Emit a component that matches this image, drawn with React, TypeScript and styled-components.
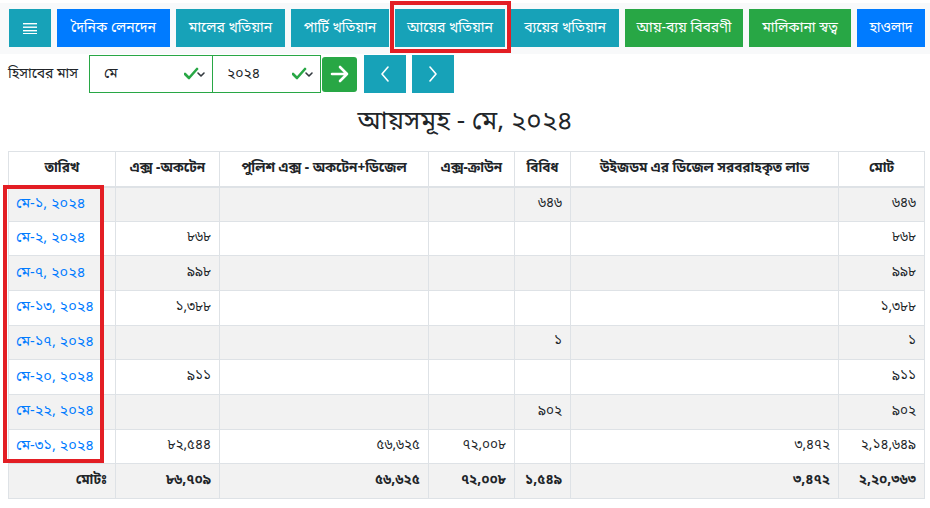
import React from "react";
import styled, { createGlobalStyle, css } from "styled-components";

const Global = createGlobalStyle`
  html, body { margin: 0; padding: 0; background: #fff; }
  body {
    font-family: "Noto Sans Bengali", "Lohit Bengali", "Noto Sans", "Liberation Sans", sans-serif;
    color: #212529;
    font-size: 14px;
  }
  * { box-sizing: border-box; }
`;

const Page = styled.div`
  width: 930px;
  padding-top: 3px;
`;

const Toolbar = styled.nav`
  display: flex;
  align-items: center;
  gap: 6px;
  background: #f8f9fa;
  padding: 6px 5px 7px 9px;
  height: 51px;
`;

type Variant = "info" | "primary" | "success";
const colors: Record<Variant, string> = {
  info: "#17a2b8",
  primary: "#007bff",
  success: "#28a745",
};

const NavButton = styled.button<{ $variant: Variant; $w: number }>`
  height: 38px;
  width: ${(p) => p.$w}px;
  border: none;
  border-radius: 0;
  background: ${(p) => colors[p.$variant]};
  color: #fff;
  font-family: inherit;
  font-size: 14px;
  padding: 0;
  display: flex;
  align-items: center;
  justify-content: center;
  white-space: nowrap;
  cursor: pointer;
`;

const Highlight = styled.div`
  position: relative;
  display: flex;
  &::after {
    content: "";
    position: absolute;
    top: -8px;
    bottom: -6px;
    left: -5px;
    right: -6px;
    border: 4px solid #e31e24;
    pointer-events: none;
  }
`;

const FilterRow = styled.div`
  display: flex;
  align-items: center;
  padding: 1px 0 0 8px;
  height: 39px;
`;

const Label = styled.span`
  font-size: 14px;
  width: 81px;
  white-space: nowrap;
`;

const SelectBox = styled.div<{ $w: number; $first?: boolean }>`
  width: ${(p) => p.$w}px;
  height: 38px;
  border: 1px solid #28a745;
  ${(p) =>
    !p.$first &&
    css`
      margin-left: -1px;
    `}
  display: flex;
  align-items: center;
  padding: 0 6px 0 14px;
  font-size: 14px;
  background: #fff;
`;

const SelectText = styled.span`
  flex: 1;
`;

const SquareButton = styled.button<{ $variant: Variant; $ml: number; $radius?: number; $h?: number }>`
  width: ${(p) => (p.$variant === "success" ? 35 : 42)}px;
  height: ${(p) => p.$h ?? 38}px;
  margin-left: ${(p) => p.$ml}px;
  border: none;
  border-radius: ${(p) => p.$radius ?? 0}px;
  background: ${(p) => colors[p.$variant]};
  display: flex;
  align-items: center;
  justify-content: center;
  padding: 0;
  cursor: pointer;
`;

const Title = styled.h2`
  margin: 0;
  height: 58px;
  display: flex;
  align-items: center;
  justify-content: center;
  font-size: 26px;
  font-weight: 400;
`;

const TableWrap = styled.div`
  position: relative;
  margin: 0 6px 0 8px;
`;

const DateHighlight = styled.div`
  position: absolute;
  left: -5px;
  top: 34px;
  width: 101px;
  height: 278px;
  border: 4px solid #e31e24;
  pointer-events: none;
`;

const Table = styled.table`
  width: 916px;
  border-collapse: collapse;
  table-layout: fixed;
  font-size: 13.5px;
`;

const Th = styled.th`
  border: 1px solid #dee2e6;
  border-bottom: 2px solid #dee2e6;
  height: 35px;
  padding: 0 4px;
  font-weight: 700;
  font-size: 13.5px;
  text-align: center;
  white-space: nowrap;
`;

const Tr = styled.tr<{ $striped: boolean }>`
  background: ${(p) => (p.$striped ? "#f2f2f2" : "#fff")};
`;

const Td = styled.td<{ $bold?: boolean }>`
  border: 1px solid #dee2e6;
  height: 34.67px;
  padding: 0 8px 0 7px;
  text-align: right;
  white-space: nowrap;
  font-weight: ${(p) => (p.$bold ? 700 : 400)};
`;

const DateLink = styled.a`
  color: #007bff;
  text-decoration: none;
  display: block;
  text-align: left;
  font-size: 14.5px;
`;

const Check = () => (
  <svg width="22" height="14" viewBox="0 0 22 14">
    <path d="M1 7 L5 11 L13 2" fill="none" stroke="#28a745" strokeWidth="2.6" strokeLinecap="round" strokeLinejoin="round" />
    <path d="M14 6 L17 9 L20 6" fill="none" stroke="#343a40" strokeWidth="1.6" strokeLinecap="round" strokeLinejoin="round" />
  </svg>
);

const Hamburger = () => (
  <svg width="14" height="12" viewBox="0 0 14 12">
    <rect x="0" y="1" width="14" height="1.4" fill="#fff" />
    <rect x="0" y="4.5" width="14" height="1.4" fill="#fff" />
    <rect x="0" y="8" width="14" height="1.4" fill="#fff" />
    <rect x="0" y="11" width="14" height="1" fill="#fff" />
  </svg>
);

const ArrowRight = () => (
  <svg width="20" height="18" viewBox="0 0 20 18">
    <path d="M2 9 H17 M10 2 L17 9 L10 16" fill="none" stroke="#fff" strokeWidth="2.6" strokeLinecap="round" strokeLinejoin="round" />
  </svg>
);

const Chevron = ({ dir }: { dir: "l" | "r" }) => (
  <svg width="10" height="16" viewBox="0 0 10 16">
    <path d={dir === "l" ? "M8 1 L2 8 L8 15" : "M2 1 L8 8 L2 15"} fill="none" stroke="#fff" strokeWidth="1.6" strokeLinecap="round" strokeLinejoin="round" />
  </svg>
);

const navItems: { label: string; v: Variant; w: number; hl?: boolean }[] = [
  { label: "দৈনিক লেনদেন", v: "primary", w: 113 },
  { label: "মালের খতিয়ান", v: "info", w: 109 },
  { label: "পার্টি খতিয়ান", v: "info", w: 98 },
  { label: "আয়ের খতিয়ান", v: "info", w: 110, hl: true },
  { label: "ব্যয়ের খতিয়ান", v: "info", w: 108 },
  { label: "আয়-ব্যয় বিবরণী", v: "success", w: 118 },
  { label: "মালিকানা স্বত্ব", v: "success", w: 102 },
  { label: "হাওলাদ", v: "primary", w: 68 },
];

const headers = [
  "তারিখ",
  "এক্স -অকটেন",
  "পুলিশ এক্স - অকটেন+ডিজেল",
  "এক্স-ক্রাউন",
  "বিবিধ",
  "উইজডম এর ডিজেল সরবরাহকৃত লাভ",
  "মোট",
];
const colWidths = [107, 104, 209, 86, 56, 268, 86];

const rows: string[][] = [
  ["মে-১, ২০২৪", "", "", "", "৬৪৬", "", "৬৪৬"],
  ["মে-২, ২০২৪", "৮৬৮", "", "", "", "", "৮৬৮"],
  ["মে-৭, ২০২৪", "৯৯৮", "", "", "", "", "৯৯৮"],
  ["মে-১৩, ২০২৪", "১,৩৮৮", "", "", "", "", "১,৩৮৮"],
  ["মে-১৭, ২০২৪", "", "", "", "১", "", "১"],
  ["মে-২০, ২০২৪", "৯১১", "", "", "", "", "৯১১"],
  ["মে-২২, ২০২৪", "", "", "", "৯০২", "", "৯০২"],
  ["মে-৩১, ২০২৪", "৮২,৫৪৪", "৫৬,৬২৫", "৭২,০০৮", "", "৩,৪৭২", "২,১৪,৬৪৯"],
];
const totals = ["মোটঃ", "৮৬,৭০৯", "৫৬,৬২৫", "৭২,০০৮", "১,৫৪৯", "৩,৪৭২", "২,২০,৩৬৩"];

export default function App() {
  return (
    <Page>
      <Global />
      <Toolbar>
        <NavButton $variant="info" $w={42} aria-label="menu">
          <Hamburger />
        </NavButton>
        {navItems.map((n) =>
          n.hl ? (
            <Highlight key={n.label}>
              <NavButton $variant={n.v} $w={n.w}>
                {n.label}
              </NavButton>
            </Highlight>
          ) : (
            <NavButton key={n.label} $variant={n.v} $w={n.w}>
              {n.label}
            </NavButton>
          )
        )}
      </Toolbar>
      <FilterRow>
        <Label>হিসাবের মাস</Label>
        <SelectBox $w={124} $first>
          <SelectText>মে</SelectText>
          <Check />
        </SelectBox>
        <SelectBox $w={109}>
          <SelectText>২০২৪</SelectText>
          <Check />
        </SelectBox>
        <SquareButton $variant="success" $ml={1} $radius={3} $h={35}>
          <ArrowRight />
        </SquareButton>
        <SquareButton $variant="info" $ml={7}>
          <Chevron dir="l" />
        </SquareButton>
        <SquareButton $variant="info" $ml={6}>
          <Chevron dir="r" />
        </SquareButton>
      </FilterRow>
      <Title>আয়সমূহ - মে, ২০২৪</Title>
      <TableWrap>
        <Table>
          <colgroup>
            {colWidths.map((w, i) => (
              <col key={i} style={{ width: w }} />
            ))}
          </colgroup>
          <thead>
            <tr>
              {headers.map((h) => (
                <Th key={h}>{h}</Th>
              ))}
            </tr>
          </thead>
          <tbody>
            {rows.map((r, i) => (
              <Tr key={r[0]} $striped={i % 2 === 0}>
                {r.map((c, j) => (
                  <Td key={j}>{j === 0 ? <DateLink href="#">{c}</DateLink> : c}</Td>
                ))}
              </Tr>
            ))}
            <Tr $striped>
              {totals.map((c, j) => (
                <Td key={j} $bold>
                  {c}
                </Td>
              ))}
            </Tr>
          </tbody>
        </Table>
        <DateHighlight />
      </TableWrap>
    </Page>
  );
}
